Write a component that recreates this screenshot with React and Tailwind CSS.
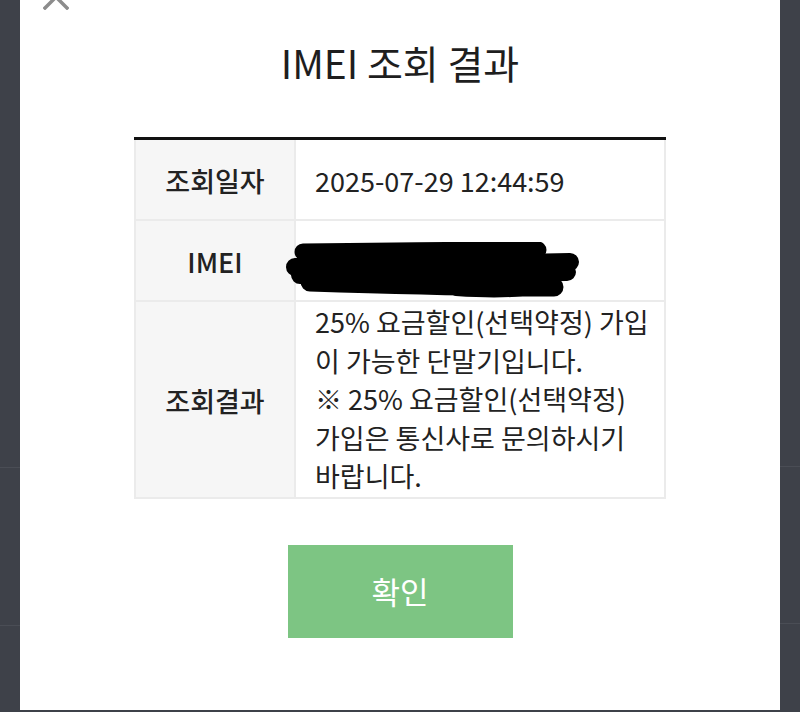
import React from 'react';

const font = { fontFamily: '"Noto Sans CJK KR", "Noto Sans", sans-serif' };

// Marker scribble hiding the device number
const Redaction = () => (
  <svg width="300" height="56" viewBox="0 0 300 56" className="-ml-[29px] self-start mt-[18px] block shrink-0">
    <g stroke="#000" strokeLinecap="round" fill="none">
      <path d="M17 10 C90 9 180 8 252 8" strokeWidth="17" />
      <path d="M160 7 C200 5 230 5 250 7" strokeWidth="12" />
      <path d="M9 25 C100 24 200 21 284 20" strokeWidth="18" />
      <path d="M14 33 C120 32 220 31 281 30" strokeWidth="18" />
      <path d="M24 40 C120 43 220 45 268 45" strokeWidth="19" />
      <path d="M170 49 C200 51 220 51 236 49" strokeWidth="10" />
    </g>
  </svg>
);

const Row = ({ label, children, tall }) => (
  <div className="flex border-b-2 border-[#ebebeb]">
    <div className="w-[160px] shrink-0 bg-[#f6f6f6] border-l-2 border-[#ebebeb] flex items-center justify-center pt-[3px] text-[27px] font-medium text-[#222]">
      {label}
    </div>
    <div
      className={
        'flex-1 border-l-2 border-r-2 border-[#ebebeb] flex items-center pl-[19px] pr-2 text-[27px] text-[#222] ' +
        (tall ? 'py-[1px] leading-[38.5px]' : 'h-[79px] pt-[3px]')
      }
    >
      {children}
    </div>
  </div>
);

export default function App() {
  return (
    <div className="w-[800px] h-[712px] bg-[#3e4149] flex overflow-hidden" style={font}>
      <div className="w-[20px] shrink-0 flex flex-col">
        <div className="h-[468px] border-b border-[#4a4d55]" />
        <div className="h-[158px] border-b border-[#4a4d55]" />
      </div>

      <div className="relative w-[760px] h-[710px] bg-white flex flex-col items-center overflow-hidden">
        <svg className="absolute left-[23px] top-[-16px]" width="26" height="26" viewBox="0 0 26 26">
          <path d="M2 2 L24 24 M24 2 L2 24" stroke="#8c8c8c" strokeWidth="3.5" strokeLinecap="square" />
        </svg>

        <h1 className="mt-[34px] text-[39px] font-normal text-[#1e1e1e] leading-[56px]">IMEI 조회 결과</h1>

        <div className="mt-[47px] w-[532px] border-t-[3px] border-[#111]">
          <Row label="조회일자">2025-07-29 12:44:59</Row>
          <Row label="IMEI">
            <Redaction />
          </Row>
          <Row label="조회결과" tall>
            <p>
              25% 요금할인(선택약정) 가입
              <br />이 가능한 단말기입니다.
              <br />※ 25% 요금할인(선택약정)
              <br />가입은 통신사로 문의하시기
              <br />바랍니다.
            </p>
          </Row>
        </div>

        <button className="mt-[46px] w-[225px] h-[93px] bg-[#7dc583] text-white text-[31px] font-normal">확인</button>
      </div>

      <div className="w-[20px] shrink-0 flex flex-col">
        <div className="h-[467px] border-b border-[#4a4d55]" />
        <div className="h-[157px] border-b border-[#4a4d55]" />
      </div>
    </div>
  );
}
